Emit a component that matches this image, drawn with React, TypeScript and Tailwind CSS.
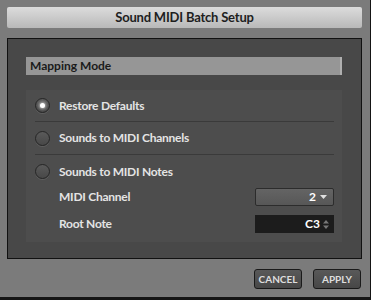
import { useState } from 'react';

const font = { fontFamily: 'Lato, "Open Sans", "Liberation Sans", sans-serif' };

function Radio({ checked }: { checked: boolean }) {
  return (
    <span className="w-[15px] h-[15px] rounded-full border border-[#262626] bg-gradient-to-b from-[#5a5a5a] to-[#484848] shadow-[0_1px_0_rgba(255,255,255,0.1)] flex items-center justify-center shrink-0">
      {checked && <span className="w-[5px] h-[5px] rounded-full bg-white shadow-[0_0_3px_1px_rgba(255,255,255,0.6)]" />}
    </span>
  );
}

export default function App() {
  const [mode, setMode] = useState('restore');
  const options = [
    { id: 'restore', label: 'Restore Defaults' },
    { id: 'channels', label: 'Sounds to MIDI Channels' },
    { id: 'notes', label: 'Sounds to MIDI Notes' },
  ];

  return (
    <div style={font} className="w-[371px] h-[300px] bg-[#7b7b7b] border-r border-b-[3px] border-[#151515] flex flex-col px-[7px] pt-[7px] overflow-hidden">
      {/* Title */}
      <div className="h-[21px] w-[355px] rounded-[2px] bg-gradient-to-b from-[#dcdcdc] to-[#b9b9b9] flex items-center justify-center text-[13px] tracking-[-0.2px] font-bold text-[#1e1e1e]">
        Sound MIDI Batch Setup
      </div>

      {/* Panel */}
      <div className="mt-[10px] w-[355px] h-[221px] bg-[#484848] border border-[#111] pt-[18px] pl-[18px] pr-[19px] flex flex-col">
        <div className="h-[18px] bg-[#969696] border-r-2 border-[#b0b0b0] flex items-center pl-[4px] text-[12px] font-bold text-[#1a1a1a]">
          Mapping Mode
        </div>

        <div className="mt-[15px] h-[152px] bg-[#4d4d4d] pl-[9px] pr-[8px] flex flex-col">
          {options.map((o, i) => (
            <button
              key={o.id}
              onClick={() => setMode(o.id)}
              className={`flex items-center gap-[9px] text-left text-[12px] tracking-[-0.25px] font-bold text-[#e4e4e4] ${i === 0 ? 'h-[32px]' : 'h-[33px]'} ${i < 2 ? 'border-b border-[#3a3a3a]' : ''}`}
            >
              <Radio checked={mode === o.id} />
              {o.label}
            </button>
          ))}

          <div className="h-[18px] flex items-center justify-between pl-[24px]">
            <span className="text-[12px] tracking-[-0.25px] font-bold text-[#e4e4e4]">MIDI Channel</span>
            <div className="w-[79px] h-[18px] rounded-[2px] border border-[#2c2c2c] bg-gradient-to-b from-[#646464] to-[#575757] flex items-center justify-end gap-[4px] pr-[6px] text-[12px] font-bold text-white">
              2
              <svg width="7" height="4" viewBox="0 0 7 4"><path d="M0 0h7L3.5 4z" fill="#e0e0e0" /></svg>
            </div>
          </div>

          <div className="mt-[9px] h-[18px] flex items-center justify-between pl-[24px]">
            <span className="text-[12px] tracking-[-0.25px] font-bold text-[#e4e4e4]">Root Note</span>
            <div className="w-[79px] h-[18px] bg-[#1c1c1c] flex items-center justify-end gap-[3px] pr-[5px] text-[12px] font-bold text-white">
              C3
              <svg width="6" height="9" viewBox="0 0 6 9"><path d="M0 3.5L3 0l3 3.5zM0 5.5L3 9l3-3.5z" fill="#777" /></svg>
            </div>
          </div>
        </div>
      </div>

      {/* Buttons */}
      <div className="mt-[10px] w-[355px] flex justify-end gap-[11px] pr-[1px]">
        <button className="w-[48px] h-[20px] rounded-[3px] border border-[#1a1a1a] bg-gradient-to-b from-[#595959] to-[#474747] text-[10px] font-bold text-[#dedede]">
          CANCEL
        </button>
        <button className="w-[48px] h-[20px] rounded-[3px] border border-[#1a1a1a] bg-gradient-to-b from-[#595959] to-[#474747] text-[10px] font-bold text-[#dedede]">
          APPLY
        </button>
      </div>
    </div>
  );
}
